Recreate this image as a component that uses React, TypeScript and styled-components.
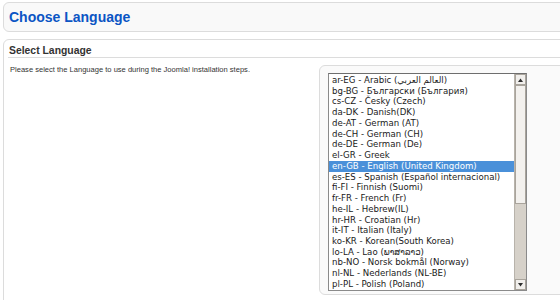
import React from "react";
import styled, { createGlobalStyle } from "styled-components";

const GlobalStyle = createGlobalStyle`
  html, body { margin: 0; padding: 0; background: #ffffff; overflow: hidden; }
  body { font-family: "Liberation Sans", Arial, sans-serif; }
`;

const Page = styled.div`
  width: 640px;
  padding: 2px 0 0 3px;
  display: flex;
  flex-direction: column;
  gap: 7px;
`;

const TitleBox = styled.div`
  height: 28px;
  border: 1px solid #dcdcdc;
  border-radius: 6px;
  background: #f9f9f9;
  display: flex;
  align-items: center;
  padding-left: 5px;
`;

const Title = styled.h1`
  margin: 0;
  font-size: 14px;
  font-weight: bold;
  color: #0b55c4;
`;

const Section = styled.div`
  height: 320px;
  border: 1px solid #dcdcdc;
  border-radius: 6px;
  background: #ffffff;
`;

const SectionHeader = styled.div`
  margin: 0 0 0 4px;
  padding: 4px 0 0 1px;
  border-bottom: 1px solid #dcdcdc;
`;

const SectionTitle = styled.h2`
  margin: 0;
  font-size: 10.4px;
  line-height: 13px;
  font-weight: bold;
  color: #333333;
`;

const Body = styled.div`
  display: grid;
  grid-template-columns: 309px 1fr;
  padding-left: 6px;
`;

const Intro = styled.p`
  margin: 7px 0 0 0;
  font-size: 7.55px;
  line-height: 10px;
  color: #333333;
`;

const InnerBox = styled.div`
  margin-top: 7px;
  height: 214px;
  border: 1px solid #dcdcdc;
  border-radius: 6px;
  background: #fafafa;
  padding: 7px 8px;
`;

const ListBox = styled.div`
  width: 197px;
  height: 216px;
  border: 1px solid #8a8a8a;
  border-top-color: #6e6e6e;
  background: #ffffff;
  display: flex;
`;

const Options = styled.div`
  flex: 1;
  overflow: hidden;
  padding-top: 1px;
`;

const Option = styled.div<{ $selected?: boolean }>`
  height: 10.74px;
  line-height: 10.74px;
  padding-left: 3px;
  font-family: "DejaVu Sans", sans-serif;
  font-size: 8.6px;
  white-space: nowrap;
  color: ${(p) => (p.$selected ? "#ffffff" : "#1a1a1a")};
  background: ${(p) => (p.$selected ? "#4a90d9" : "transparent")};
`;

const ScrollBar = styled.div`
  width: 11px;
  display: flex;
  flex-direction: column;
  background: #d6d1c9;
  border-left: 1px solid #b8b3ab;
`;

const ArrowButton = styled.div`
  height: 11px;
  background: #f1efec;
  border: 1px solid #a9a49c;
  box-sizing: border-box;
  display: flex;
  align-items: center;
  justify-content: center;
`;

const Thumb = styled.div`
  height: 119px;
  background: #f3f1ee;
  border: 1px solid #a9a49c;
  box-sizing: border-box;
`;

const Track = styled.div`
  flex: 1;
`;

const Arrow = ({ up }: { up?: boolean }) => (
  <svg width="5" height="4" viewBox="0 0 5 4">
    <path d={up ? "M0 4 L2.5 0.5 L5 4 Z" : "M0 0 L2.5 3.5 L5 0 Z"} fill="#2e2e2e" />
  </svg>
);

const languages = [
  "ar-EG - Arabic (العالم العربي)",
  "bg-BG - Български (България)",
  "cs-CZ - Česky (Czech)",
  "da-DK - Danish(DK)",
  "de-AT - German (AT)",
  "de-CH - German (CH)",
  "de-DE - German (De)",
  "el-GR - Greek",
  "en-GB - English (United Kingdom)",
  "es-ES - Spanish (Español internacional)",
  "fi-FI - Finnish (Suomi)",
  "fr-FR - French (Fr)",
  "he-IL - Hebrew(IL)",
  "hr-HR - Croatian (Hr)",
  "it-IT - Italian (Italy)",
  "ko-KR - Korean(South Korea)",
  "lo-LA - Lao (ພາສາລາວ)",
  "nb-NO - Norsk bokmål (Norway)",
  "nl-NL - Nederlands (NL-BE)",
  "pl-PL - Polish (Poland)",
];

export default function App() {
  return (
    <>
      <GlobalStyle />
      <Page>
        <TitleBox>
          <Title>Choose Language</Title>
        </TitleBox>
        <Section>
          <SectionHeader>
            <SectionTitle>Select Language</SectionTitle>
          </SectionHeader>
          <Body>
            <Intro>Please select the Language to use during the Joomla! installation steps.</Intro>
            <InnerBox>
              <ListBox>
                <Options>
                  {languages.map((l) => (
                    <Option key={l} $selected={l.startsWith("en-GB")}>
                      {l}
                    </Option>
                  ))}
                </Options>
                <ScrollBar>
                  <ArrowButton>
                    <Arrow up />
                  </ArrowButton>
                  <Thumb />
                  <Track />
                  <ArrowButton>
                    <Arrow />
                  </ArrowButton>
                </ScrollBar>
              </ListBox>
            </InnerBox>
          </Body>
        </Section>
      </Page>
    </>
  );
}
